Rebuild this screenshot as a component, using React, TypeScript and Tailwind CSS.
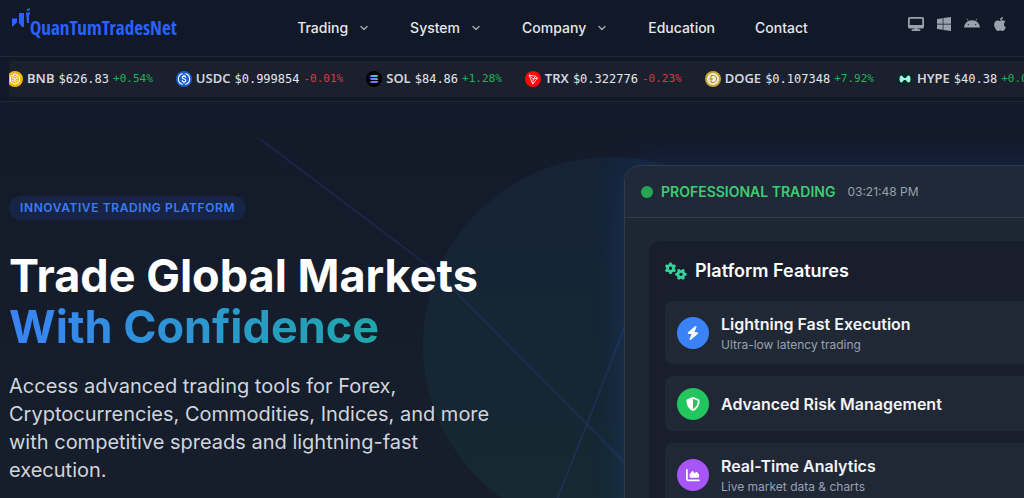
import type { ReactNode } from 'react'
import {
  FaAndroid,
  FaApple,
  FaBolt,
  FaChartArea,
  FaDesktop,
  FaGears,
  FaShieldHalved,
  FaWindows,
} from 'react-icons/fa6'
import { ChevronDown } from 'lucide-react'

const navItems = [
  { label: 'Trading', menu: true },
  { label: 'System', menu: true },
  { label: 'Company', menu: true },
  { label: 'Education', menu: false },
  { label: 'Contact', menu: false },
]

const platforms = [
  { label: 'Desktop', Icon: FaDesktop },
  { label: 'Windows', Icon: FaWindows },
  { label: 'Android', Icon: FaAndroid },
  { label: 'iOS', Icon: FaApple },
]

const coinIcons: Record<string, ReactNode> = {
  BNB: (
    <>
      <circle cx="16" cy="16" r="16" fill="#f0b90b" />
      <g fill="none" stroke="#fff" strokeWidth="2">
        <path d="M16 5.500l9 5.200v10.600l-9 5.200-9-5.200V10.700z" />
        <path d="M10 13l6 3.500 6-3.500M16 16.500V23M12 9.500l4 2.500 4-2.500M10 18l3 2M22 18l-3 2" />
      </g>
    </>
  ),
  USDC: (
    <>
      <circle cx="16" cy="16" r="16" fill="#1a5fd0" />
      <g fill="none" stroke="#fff" strokeWidth="2.200" strokeLinecap="round">
        <path d="M12.500 5.500a11 11 0 0 0 0 21M19.500 5.500a11 11 0 0 1 0 21" />
        <path d="M19.500 12.500c-.5-1.500-1.800-2.200-3.500-2.200-2 0-3.500 1-3.500 2.700 0 4 7.200 1.800 7.200 5.800 0 1.800-1.600 2.900-3.700 2.900-2 0-3.500-.9-3.800-2.500M16 8v2M16 22v2" />
      </g>
    </>
  ),
  SOL: (
    <>
      <defs>
        <linearGradient id="sol" x1="0" y1="1" x2="1" y2="0">
          <stop offset="0" stopColor="#9945ff" />
          <stop offset="0.500" stopColor="#6a8dfa" />
          <stop offset="1" stopColor="#19fb9b" />
        </linearGradient>
      </defs>
      <circle cx="16" cy="16" r="16" fill="#000" />
      <path
        d="M10 8h15l-3 4H7zM7 14h15l3 4H10zM10 20h15l-3 4H7z"
        fill="url(#sol)"
      />
    </>
  ),
  TRX: (
    <>
      <circle cx="16" cy="16" r="16" fill="#ff060a" />
      <path
        d="M8 8l13 2.500 4 3.500-9.500 12zM8 8l8.500 8-1 10M16.500 16l4.500-5.500M16.500 16l8.500-2"
        fill="none"
        stroke="#fff"
        strokeWidth="1.600"
        strokeLinejoin="round"
      />
    </>
  ),
  DOGE: (
    <>
      <circle cx="16" cy="16" r="16" fill="#c3a634" />
      <circle cx="16" cy="16" r="12" fill="#f3ead0" />
      <path
        d="M12 9h4.500c4 0 6.500 2.800 6.500 7s-2.500 7-6.500 7H12zM9 16h7"
        fill="none"
        stroke="#a98a2a"
        strokeWidth="2"
      />
    </>
  ),
  HYPE: (
    <>
      <circle cx="16" cy="16" r="14" fill="#072723" />
      <path
        d="M5 16c0-4.500 1.500-7 4-7 3 0 3 5 5.500 5s2.500 0 4-1c1.500-1.500 2-4 4.500-4 3 0 4 3 4 7s-1 7-4 7c-2.500 0-3-2.500-4.500-4-1.500-1-1.500-1-4-1s-2.500 5-5.500 5c-2.500 0-4-2.500-4-7z"
        fill="#97fce4"
      />
    </>
  ),
}

const coins = [
  { symbol: 'BNB', price: '$626.83', change: '+0.54%' },
  { symbol: 'USDC', price: '$0.999854', change: '-0.01%' },
  { symbol: 'SOL', price: '$84.86', change: '+1.28%' },
  { symbol: 'TRX', price: '$0.322776', change: '-0.23%' },
  { symbol: 'DOGE', price: '$0.107348', change: '+7.92%' },
  { symbol: 'HYPE', price: '$40.38', change: '+0.08%' },
]

const features = [
  {
    title: 'Lightning Fast Execution',
    text: 'Ultra-low latency trading',
    color: 'bg-[#3b82f6]',
    Icon: FaBolt,
  },
  { title: 'Advanced Risk Management', text: '', color: 'bg-[#22c55e]', Icon: FaShieldHalved },
  {
    title: 'Real-Time Analytics',
    text: 'Live market data & charts',
    color: 'bg-[#a855f7]',
    Icon: FaChartArea,
  },
]

function Logo() {
  return (
    <a href="#" className="mb-1 flex w-[187px] items-start text-[#2962ff]">
      <svg viewBox="0 0 20 20" className="h-5 w-5 shrink-0" fill="currentColor">
        <path d="M2 10.500h5v4L2 19zM9 5h5v14h-2l-3-4zM17 1l4-1v2l-4 1zM16 4.500h5v2h-2V15h-2z" />
      </svg>
      <span className="mt-1 font-['Noto_Sans_Condensed','Open_Sans_Condensed','Roboto_Condensed','Lato',sans-serif] text-[19px] leading-8">
        QuanTumTradesNet
      </span>
    </a>
  )
}

function Header() {
  return (
    <header className="flex h-[57px] shrink-0 items-center justify-between border-b border-[#1c2836] bg-[#111827] pr-4 pl-[10px]">
      <Logo />
      <nav className="flex items-center gap-10 text-sm font-medium text-gray-200">
        {navItems.map((item) =>
          item.menu ? (
            <button key={item.label} type="button" className="flex items-center gap-[10px]">
              {item.label}
              <ChevronDown className="h-3 w-3 text-gray-400" strokeWidth={3} />
            </button>
          ) : (
            <a key={item.label} href="#">
              {item.label}
            </a>
          ),
        )}
      </nav>
      <div className="mb-2 flex items-center gap-3 text-gray-400">
        {platforms.map(({ label, Icon }) => (
          <a key={label} href="#" aria-label={label}>
            <Icon className="h-4 w-auto" />
          </a>
        ))}
      </div>
    </header>
  )
}

function Ticker() {
  return (
    <div className="shrink-0 border-b border-[#1c2836] bg-[#111827] py-1 pl-[9px]">
      <div className="overflow-hidden bg-[#1a202e]">
        <div className="-ml-0.5 flex h-9 items-center gap-[23px]">
          {coins.map((coin) => (
            <div key={coin.symbol} className="flex shrink-0 items-center gap-1">
              <svg viewBox="0 0 32 32" className="h-4 w-4">
                {coinIcons[coin.symbol]}
              </svg>
              <span className="font-['Noto_Sans',sans-serif] text-[13px] font-semibold text-gray-300">
                {coin.symbol}
              </span>
              <span className="font-['DejaVu_Sans_Mono',monospace] text-xs text-gray-200">
                {coin.price}
              </span>
              <span
                className={
                  coin.change.startsWith('+')
                    ? "font-['DejaVu_Sans_Mono',monospace] text-[11px] text-[#22b455]"
                    : "font-['DejaVu_Sans_Mono',monospace] text-[11px] text-[#d63c42]"
                }
              >
                {coin.change}
              </span>
            </div>
          ))}
        </div>
      </div>
    </div>
  )
}

function Backdrop() {
  return (
    <svg className="absolute top-0 left-0 h-[440px] w-[1024px]" viewBox="0 0 1024 440" fill="none">
      <defs>
        <linearGradient id="orb" x1="0" y1="0" x2="0" y2="1">
          <stop offset="0" stopColor="#2a86c8" stopOpacity="0.080" />
          <stop offset="0.500" stopColor="#1c96a0" stopOpacity="0.080" />
          <stop offset="1" stopColor="#10b981" stopOpacity="0.070" />
        </linearGradient>
      </defs>
      <circle cx="611" cy="243" r="188" fill="url(#orb)" />
      <g stroke="#3b4fc0" strokeOpacity="0.200" strokeWidth="2">
        <path d="M260 37L427 163Q442 175 453 187L640 376" />
        <path d="M556 400L587 322L632 206" />
      </g>
    </svg>
  )
}

function FeaturePanel() {
  return (
    <section className="relative -mr-44 ml-1.5 flex-1 rounded-2xl border border-[#303b49] bg-[#1c2733] shadow-[0_0_32px_rgba(37,99,235,0.200)]">
      <div className="flex h-[52px] items-center rounded-t-2xl border-b border-[#333e4d] bg-[#1f2937] px-4">
        <span className="h-3 w-3 rounded-full bg-[#22a855]" />
        <span className="ml-2 text-sm font-semibold text-[#3fcb74]">PROFESSIONAL TRADING</span>
        <span className="ml-3 text-xs text-gray-400">03:21:48 PM</span>
      </div>
      <div className="p-6 pt-[23px]">
        <div className="rounded-xl bg-[#181e2c] p-4">
          <h2 className="flex items-center gap-2 text-lg leading-7 font-semibold text-white">
            <FaGears className="h-[18px] w-[22px] text-[#34d399]" />
            Platform Features
          </h2>
          <div className="mt-4 flex flex-col gap-3">
            {features.map(({ title, text, color, Icon }) => (
              <div
                key={title}
                className="flex min-h-[55px] items-center gap-3 rounded-lg bg-[#202836] px-3 py-[11px]"
              >
                <div
                  className={`flex h-8 w-8 shrink-0 items-center justify-center rounded-full text-white ${color}`}
                >
                  <Icon className="h-[14px] w-auto" />
                </div>
                <div>
                  <h3 className="text-base leading-6 font-semibold text-gray-100">{title}</h3>
                  {text && <p className="text-xs leading-[17px] text-gray-400">{text}</p>}
                </div>
              </div>
            ))}
          </div>
        </div>
      </div>
    </section>
  )
}

export default function App() {
  return (
    <div className="flex h-screen flex-col overflow-hidden bg-[#151c2a] font-['Inter',sans-serif]">
      <Header />
      <Ticker />
      <main className="relative flex flex-1 items-start bg-linear-to-b from-[#131a29] to-[#171e2c] pt-[63px] pl-[9px]">
        <Backdrop />
        <div className="relative w-3/5 pt-[31px]">
          <div className="flex h-6 w-fit items-center rounded-full bg-[#172445] px-[11px] text-xs font-semibold tracking-wider text-[#3b7cf6]">
            INNOVATIVE TRADING PLATFORM
          </div>
          <h1 className="mt-[30px] text-[45px] leading-[51px] font-bold text-white">
            Trade Global Markets
            <span className="block w-fit bg-linear-to-r from-[#3b82f6] to-[#22a6a8] bg-clip-text text-transparent">
              With Confidence
            </span>
          </h1>
          <p className="mt-5 max-w-[500px] text-xl leading-7 text-gray-300">
            Access advanced trading tools for Forex, Cryptocurrencies, Commodities, Indices, and more
            with competitive spreads and lightning-fast execution.
          </p>
        </div>
        <FeaturePanel />
      </main>
    </div>
  )
}
